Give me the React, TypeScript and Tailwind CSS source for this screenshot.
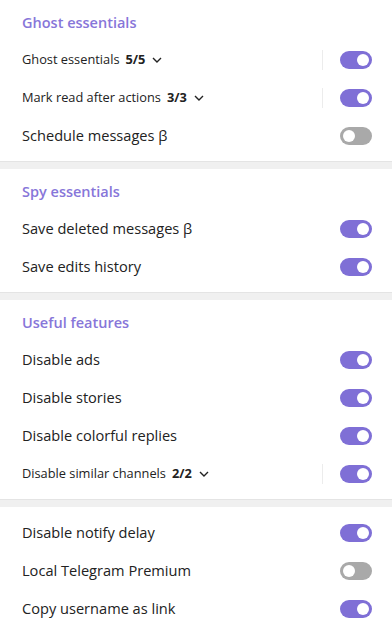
import React from "react";

type Row = {
  label: string;
  count?: string;
  on: boolean;
};

type Section = {
  title?: string;
  rows: Row[];
};

const SECTIONS: Section[] = [
  {
    title: "Ghost essentials",
    rows: [
      { label: "Ghost essentials", count: "5/5", on: true },
      { label: "Mark read after actions", count: "3/3", on: true },
      { label: "Schedule messages β", on: false },
    ],
  },
  {
    title: "Spy essentials",
    rows: [
      { label: "Save deleted messages β", on: true },
      { label: "Save edits history", on: true },
    ],
  },
  {
    title: "Useful features",
    rows: [
      { label: "Disable ads", on: true },
      { label: "Disable stories", on: true },
      { label: "Disable colorful replies", on: true },
      { label: "Disable similar channels", count: "2/2", on: true },
    ],
  },
  {
    rows: [
      { label: "Disable notify delay", on: true },
      { label: "Local Telegram Premium", on: false },
      { label: "Copy username as link", on: true },
    ],
  },
];

function Toggle({ on }: { on: boolean }) {
  return (
    <div
      className={
        "flex h-[18px] w-[32px] items-center rounded-full px-[3px] " +
        (on ? "justify-end bg-[#7f6fd6]" : "justify-start bg-[#a9a9a9]")
      }
    >
      <div className="h-[12px] w-[12px] rounded-full bg-white" />
    </div>
  );
}

function Chevron() {
  return (
    <svg width="10" height="6" viewBox="0 0 10 6" className="ml-[7px]">
      <path d="M1 1l4 4 4-4" fill="none" stroke="#222" strokeWidth="1.4" />
    </svg>
  );
}

export default function App() {
  return (
    <div className="w-[392px] bg-white font-['Open_Sans',sans-serif] text-[#222]">
      {SECTIONS.map((section, i) => (
        <div key={i}>
          {i > 0 && (
            <div className="h-[8px] border-t border-[#e4e4e4] bg-[#f0f0f0]" />
          )}
          <div className={section.title ? "pb-[6px]" : "pt-[7px] pb-[6px]"}>
            {section.title && (
              <div className="flex h-[41px] items-center px-[22px] pt-[4px] text-[14.5px] font-semibold text-[#8776d9]">
                {section.title}
              </div>
            )}
            {section.rows.map((row) => (
              <div
                key={row.label}
                className="flex h-[38px] items-center pl-[22px] pr-[20px]"
              >
                {row.count ? (
                  <div className="flex flex-1 items-center text-[12.8px]">
                    <span>{row.label}</span>
                    <span className="ml-[6px] font-bold">{row.count}</span>
                    <Chevron />
                  </div>
                ) : (
                  <div className="flex-1 text-[14.6px]">{row.label}</div>
                )}
                {row.count && (
                  <div className="mr-[17px] h-[20px] w-px bg-[#ececec]" />
                )}
                <Toggle on={row.on} />
              </div>
            ))}
          </div>
        </div>
      ))}
    </div>
  );
}
